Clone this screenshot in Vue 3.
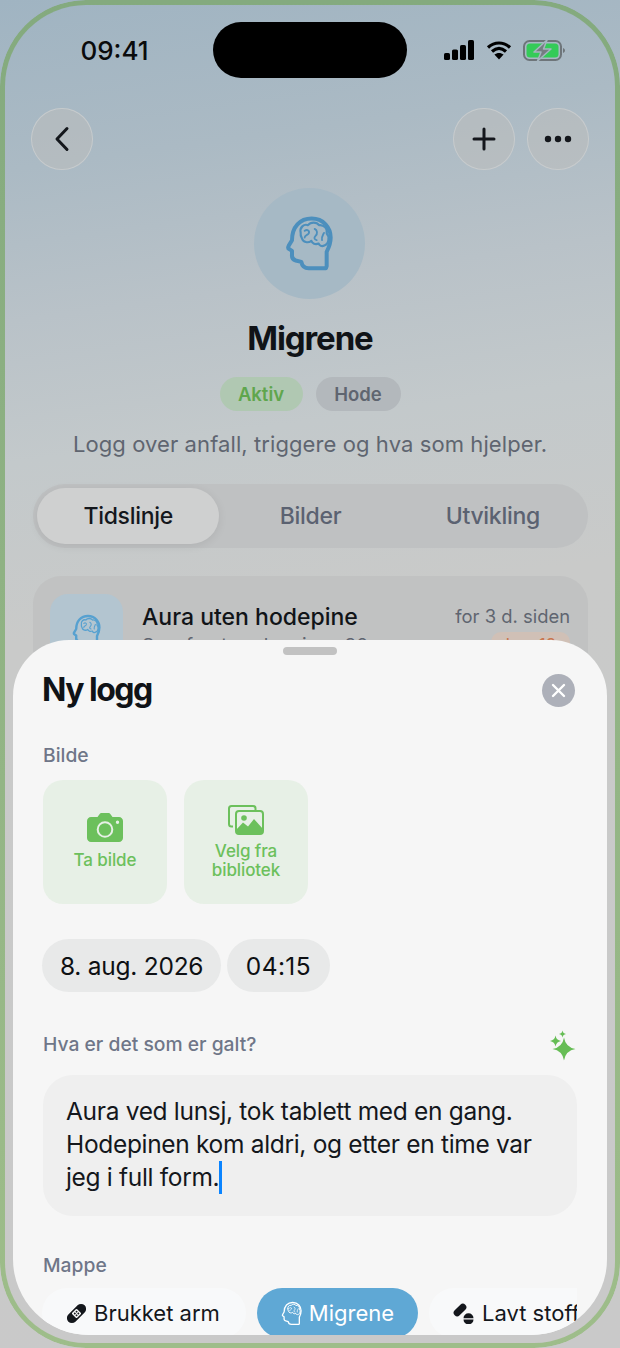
<script setup>
const star = (c, d, r) => {
  const k = r * 0.14
  return `M${c} ${d - r}Q${c + k} ${d - k} ${c + r} ${d}Q${c + k} ${d + k} ${c} ${d + r}Q${c - k} ${d + k} ${c - r} ${d}Q${c - k} ${d - k} ${c} ${d - r}Z`
}
const sparkle = [star(14, 19, 11.5), star(5.5, 11, 5.5), star(12.5, 4, 3.5)].join('')
</script>

<template>
  <div class="phone">
    <svg class="defs" width="0" height="0" aria-hidden="true">
      <symbol id="brain" viewBox="255 105 150 170">
        <path d="M378 264H326C313 264 306 256 304 245L287 241C278 239 275 231 276 222V212L268 207C264 205 264 201 266 197L276 180C276 140 300 115 335 115C370 115 392 142 392 172C392 192 385 205 380 215V258Z" />
        <path class="inner" d="M302 158C298 142 312 130 324 135C332 125 350 125 357 135C372 133 384 146 380 160C390 170 386 192 373 196C365 200 358 196 356 190C346 194 336 190 334 182C324 190 309 186 306 175C303 170 301 164 302 158Z" />
        <path class="inner detail" d="M314 152C322 146 330 152 326 160C322 166 314 164 314 172M344 146C352 150 354 160 346 168C342 172 342 178 350 180M372 158C368 166 364 170 366 180" />
      </symbol>
    </svg>

    <header class="status">
      <span class="time">09:41</span>
      <div class="island"></div>
      <div class="status-icons">
        <svg width="31" height="20" viewBox="0 0 31 20">
          <rect x="0" y="13" width="6" height="7" rx="1.6" /><rect x="8" y="9.5" width="6" height="10.5" rx="1.6" />
          <rect x="16" y="5" width="6" height="15" rx="1.6" /><rect x="24" y="0" width="6" height="20" rx="1.6" />
        </svg>
        <svg width="26" height="20" viewBox="0 0 26 20">
          <path d="M2 7.5C8.5 1.5 17.5 1.5 24 7.5M6 11.5C10.5 7.5 15.5 7.5 20 11.5" fill="none" stroke="#000" stroke-width="3.2" stroke-linecap="butt" />
          <path d="M8.4 14.6C11.2 12.3 14.8 12.3 17.6 14.6L13 19.6Z" />
        </svg>
        <svg class="batt" width="43" height="21" viewBox="0 0 43 21">
          <rect x="1" y="1" width="37" height="19" rx="5.5" fill="none" stroke="#6e757a" stroke-width="2" />
          <rect x="3.500" y="3.500" width="32" height="14" rx="3.500" fill="#34cb58" />
          <path d="M40 8v5c1.2-.4 2-1.4 2-2.5S41.200 8.400 40 8Z" fill="#6e757a" />
          <path d="M24 0L11 12H18L14.500 21L28 9H20.500Z" fill="#767d82" stroke="#a5b5bf" stroke-width="1.500" stroke-linejoin="round" />
        </svg>
      </div>
    </header>

    <nav class="nav">
      <button class="round">
        <svg width="16" height="26" viewBox="0 0 16 26"><path d="M13 2.500L3 13L13 23.500" /></svg>
      </button>
      <span class="nav-gap"></span>
      <button class="round">
        <svg width="26" height="26" viewBox="0 0 26 26"><path d="M13 3V23M3 13H23" /></svg>
      </button>
      <button class="round">
        <svg class="dots" width="28" height="8" viewBox="0 0 28 8"><circle cx="4" cy="4" r="3.200" /><circle cx="14" cy="4" r="3.200" /><circle cx="24" cy="4" r="3.200" /></svg>
      </button>
    </nav>

    <section class="hero">
      <div class="hero-icon">
        <svg class="brain brain-lg" width="50" height="57"><use href="#brain" /></svg>
      </div>
      <h1>Migrene</h1>
      <div class="chips">
        <span class="chip chip-green">Aktiv</span>
        <span class="chip chip-grey">Hode</span>
      </div>
      <p class="desc">Logg over anfall, triggere og hva som hjelper.</p>
    </section>

    <div class="tabs">
      <span class="tab tab-on">Tidslinje</span>
      <span class="tab">Bilder</span>
      <span class="tab">Utvikling</span>
    </div>

    <article class="card">
      <div class="card-tile">
        <svg class="brain brain-md" width="30" height="46"><use href="#brain" /></svg>
      </div>
      <div class="card-body">
        <div class="card-title">Aura uten hodepine</div>
        <div class="card-sub">Synsforstyrrelser i ca. 30</div>
      </div>
      <div class="card-side">
        <div class="card-when">for 3 d. siden</div>
        <div class="card-badge">Lav 12</div>
      </div>
    </article>

    <section class="sheet">
      <div class="handle"></div>
      <div class="sheet-head">
        <h2>Ny logg</h2>
        <button class="close">
          <svg width="15" height="15" viewBox="0 0 15 15"><path d="M2 2L13 13M13 2L2 13" /></svg>
        </button>
      </div>

      <div class="label label-first">Bilde</div>
      <div class="tiles">
        <div class="tile tile-cam">
          <svg width="36" height="29" viewBox="0 0 36 29">
            <path fill-rule="evenodd" d="M4 4H10.500L12.500 1.200C13 .5 13.800 0 14.800 0H21.200C22.200 0 23 .5 23.500 1.200L25.500 4H32C34.200 4 36 5.800 36 8V25C36 27.200 34.200 29 32 29H4C1.800 29 0 27.200 0 25V8C0 5.800 1.800 4 4 4ZM18 8.200A8.300 8.300 0 1 0 18 24.800A8.300 8.300 0 1 0 18 8.200ZM18 10.200A6.300 6.300 0 1 1 18 22.800A6.300 6.300 0 1 1 18 10.200ZM30.500 7.500A1.700 1.700 0 1 0 30.500 10.900A1.700 1.700 0 1 0 30.500 7.500Z" />
          </svg>
          <span>Ta bilde</span>
        </div>
        <div class="tile">
          <svg width="36" height="30" viewBox="0 0 36 30">
            <path d="M5 21.500H3.500C2 21.500 1 20.500 1 19V3.500C1 2 2 1 3.500 1H25C26.500 1 27.500 2 27.500 3.500V5" fill="none" stroke="#6cc05c" stroke-width="2" />
            <rect x="8" y="6" width="27" height="23" rx="3" fill="none" stroke="#6cc05c" stroke-width="2" />
            <path d="M8 25L15 17.500L20 21.500L26 14L35 24V26C35 27.700 33.700 29 32 29H11C9.300 29 8 27.700 8 26Z" />
            <circle cx="16" cy="13" r="2.800" />
          </svg>
          <span>Velg fra<br />bibliotek</span>
        </div>
      </div>

      <div class="dates">
        <span class="date">8. aug. 2026</span>
        <span class="date date-time">04:15</span>
      </div>

      <div class="label-row">
        <span class="label">Hva er det som er galt?</span>
        <svg class="sparkle" width="27" height="31" viewBox="0 0 27 31"><path :d="sparkle" /></svg>
      </div>

      <div class="field">
        Aura ved lunsj, tok tablett med en gang.<br />
        Hodepinen kom aldri, og etter en time var<br />
        jeg i full form.<span class="caret"></span>
      </div>

      <div class="label label-folder">Mappe</div>
      <div class="pills">
        <span class="pill pill-arm">
          <svg width="21" height="21" viewBox="0 0 21 21">
            <g transform="rotate(-45 10.500 10.500)">
              <rect x="-1" y="5.500" width="23" height="10" rx="5" />
              <rect x="7" y="7" width="7" height="7" rx="1" fill="#f8f9fa" />
              <rect x="8.500" y="8.500" width="1.600" height="1.600" /><rect x="11" y="8.500" width="1.600" height="1.600" />
              <rect x="8.500" y="11" width="1.600" height="1.600" /><rect x="11" y="11" width="1.600" height="1.600" />
            </g>
          </svg>
          Brukket arm
        </span>
        <span class="pill pill-on">
          <svg class="brain brain-sm" width="22" height="25"><use href="#brain" /></svg>
          Migrene
        </span>
        <span class="pill">
          <svg width="21" height="21" viewBox="0 0 21 21">
            <g transform="rotate(-45 7 7)"><rect x="-.5" y="3.500" width="15" height="7" rx="3.500" /></g>
            <path d="M10.500 15.200A5 5 0 0 1 20.500 15.200ZM10.500 16.400A5 5 0 0 0 20.500 16.400Z" />
          </svg>
          Lavt stoff
        </span>
      </div>
    </section>

    <div class="frame"></div>
  </div>
</template>

<style scoped>
.phone {
  position: relative;
  width: 620px;
  height: 1348px;
  overflow: hidden;
  box-sizing: border-box;
  padding-top: 22px;
  font-family: Inter, "Liberation Sans", sans-serif;
  background: linear-gradient(172deg, #a0b4c2 0, #abbac4 170px, #b9c2c8 320px, #c3c9cb 460px, #c9cac9 640px, #c9c9c9 100%);
  color: #14171c;
}
.defs { position: absolute; }
.status {
  display: grid;
  grid-template-columns: 213px 194px 213px;
  height: 56px;
  align-items: center;
}
.time {
  justify-self: center;
  padding-left: 16px;
  font-size: 26px;
  font-weight: 500;
  color: #0a0b0c;
}
.island {
  height: 56px;
  border-radius: 28px;
  background: #000;
}
.status-icons {
  display: flex;
  justify-content: center;
  align-items: center;
  gap: 11px;
  padding-right: 17px;
}
.status-icons svg { fill: #000; }
.nav {
  display: flex;
  gap: 12px;
  margin-top: 30px;
  padding: 0 31px;
}
.nav-gap { flex: 1; }
.round {
  display: flex;
  align-items: center;
  justify-content: center;
  box-sizing: border-box;
  width: 62px;
  height: 62px;
  padding: 0;
  border: 1.5px solid rgba(205, 208, 210, 0.75);
  border-radius: 50%;
  background: rgba(190, 190, 188, 0.5);
}
.round svg { fill: none; stroke: #14171c; stroke-width: 3; stroke-linecap: round; stroke-linejoin: round; }
.round .dots { fill: #14171c; stroke: none; }
.hero {
  display: flex;
  flex-direction: column;
  align-items: center;
  margin-top: 18px;
}
.hero-icon {
  display: flex;
  align-items: center;
  justify-content: center;
  width: 111px;
  height: 111px;
  margin-left: -1px;
  border-radius: 50%;
  background: #a6b9c5;
}
.brain { fill: none; stroke: #4c8fbd; stroke-linejoin: round; stroke-linecap: round; }
.brain-lg { stroke-width: 12; }
.brain-md { stroke-width: 12; stroke: #57a1d0; }
.brain-sm { stroke-width: 9; stroke: #fff; }
.inner { stroke-width: 6.500; }
.detail { stroke-width: 5.500; }
h1 {
  margin: 19px 0 0;
  font-size: 33px;
  line-height: 40px;
  font-weight: 700;
  letter-spacing: -1.1px;
  color: #101317;
}
.chips {
  display: flex;
  gap: 13px;
  margin-top: 19px;
}
.chip {
  display: flex;
  align-items: center;
  justify-content: center;
  height: 34px;
  border-radius: 17px;
  font-size: 18.500px;
  font-weight: 600;
}
.chip-green { width: 83px; background: #b0c8b2; color: #5fa64d; }
.chip-grey { width: 85px; background: #b3b8bc; color: #5f6570; }
.desc {
  margin: 18px 0 0;
  font-size: 22px;
  line-height: 30px;
  letter-spacing: 0.09px;
  color: #5f6570;
}
.tabs {
  display: grid;
  grid-template-columns: repeat(3, 1fr);
  box-sizing: border-box;
  height: 64px;
  margin: 25px 32px 0 33px;
  padding: 4px;
  border-radius: 32px;
  background: #bfc1c2;
}
.tab {
  display: flex;
  align-items: center;
  justify-content: center;
  border-radius: 28px;
  font-size: 23px;
  font-weight: 500;
  letter-spacing: -0.3px;
  color: #5b6271;
}
.tab-on {
  background: #cfd0d0;
  color: #14171c;
  box-shadow: 0 2px 10px rgba(0, 0, 0, 0.08);
}
.card {
  display: flex;
  gap: 19px;
  height: 160px;
  box-sizing: border-box;
  margin: 28px 32px 0 33px;
  padding: 18px 18px 0 17px;
  border-radius: 28px;
  background: #c1c2c2;
}
.card-tile {
  display: flex;
  align-items: center;
  justify-content: center;
  width: 73px;
  height: 73px;
  flex-shrink: 0;
  border-radius: 18px;
  background: #b3c5d0;
}
.card-body { flex: 1; }
.card-title {
  margin-top: 9px;
  font-size: 23px;
  line-height: 28px;
  font-weight: 500;
  white-space: nowrap;
  color: #111418;
}
.card-sub {
  margin-top: 3px;
  font-size: 19px;
  line-height: 24px;
  color: #5f6570;
  white-space: nowrap;
}
.card-side {
  display: flex;
  flex-direction: column;
  align-items: flex-end;
}
.card-when {
  margin-top: 10px;
  font-size: 18.400px;
  line-height: 24px;
  color: #5f6570;
}
.card-badge {
  margin-top: 4px;
  padding: 2px 14px;
  border-radius: 10px;
  background: #d0c0b6;
  color: #c9764f;
  font-size: 17px;
  line-height: 22px;
}
.sheet {
  position: absolute;
  left: 13px;
  right: 13px;
  top: 640px;
  bottom: 13px;
  overflow: hidden;
  box-sizing: border-box;
  padding: 0 30px;
  border-radius: 56px 56px 76px 76px;
  background: #f6f6f6;
}
.handle {
  width: 54px;
  height: 8px;
  margin: 7px auto 0;
  border-radius: 4px;
  background: #c2c2c2;
}
.sheet-head {
  display: flex;
  align-items: center;
  justify-content: space-between;
  height: 40px;
  margin-top: 15px;
}
h2 {
  margin: 0 0 0 -1px;
  font-size: 32px;
  line-height: 40px;
  font-weight: 700;
  letter-spacing: -1.500px;
  color: #101317;
}
.close {
  display: flex;
  align-items: center;
  justify-content: center;
  width: 33px;
  height: 33px;
  padding: 0;
  margin-right: 2px;
  border: 0;
  border-radius: 50%;
  background: #adb0b9;
}
.close svg { fill: none; stroke: #fff; stroke-width: 2.400; stroke-linecap: round; }
.label {
  font-size: 19.300px;
  line-height: 24px;
  font-weight: 500;
  color: #6f7688;
}
.label-first { margin-top: 33px; }
.tiles {
  display: flex;
  gap: 17px;
  margin-top: 13px;
}
.tile {
  display: flex;
  flex-direction: column;
  align-items: center;
  justify-content: center;
  gap: 7px;
  width: 124px;
  height: 124px;
  box-sizing: border-box;
  border-radius: 20px;
  background: #e7f0e6;
  color: #6cc05c;
  font-size: 17px;
  font-weight: 500;
  line-height: 19px;
  letter-spacing: -0.1px;
  text-align: center;
}
.tile svg { fill: #6cc05c; }
.tile-cam {
  gap: 9px;
  padding-bottom: 2px;
}
.dates {
  display: flex;
  gap: 6px;
  margin: 35px 0 0 -1px;
}
.date {
  display: flex;
  align-items: center;
  height: 53px;
  padding: 0 18px;
  border-radius: 27px;
  background: #e8e9e9;
  font-size: 24.500px;
  letter-spacing: -0.25px;
  color: #0e1013;
}
.date-time {
  padding: 0 18.500px;
  letter-spacing: 0.4px;
}
.label-row {
  display: flex;
  align-items: center;
  justify-content: space-between;
  height: 24px;
  margin-top: 40px;
}
.sparkle {
  fill: #66bd55;
  margin: -6px 0 -8px;
}
.field {
  box-sizing: border-box;
  height: 141px;
  margin-top: 19px;
  padding: 20px 23px 0;
  border-radius: 30px;
  background: #efefef;
  font-size: 24.500px;
  line-height: 33px;
  letter-spacing: -0.32px;
  white-space: nowrap;
  color: #14171c;
}
.caret {
  display: inline-block;
  width: 3px;
  height: 33px;
  margin-left: 0;
  vertical-align: -8px;
  background: #0a84ff;
}
.label-folder { margin-top: 37px; }
.pills {
  display: flex;
  gap: 11px;
  margin: 11px 0 0 -1px;
  overflow: hidden;
}
.pill {
  display: flex;
  align-items: center;
  flex-shrink: 0;
  gap: 8px;
  height: 50px;
  padding: 0 24px;
  border-radius: 25px;
  background: #f8f9fa;
  font-size: 22px;
  font-weight: 400;
  color: #14171c;
  white-space: nowrap;
}
.pill svg { fill: #14171c; }
.pill .brain { fill: none; }
.pill-arm { gap: 7px; padding-right: 26px; }
.pill-on { gap: 6px; background: #5fa8d5; color: #fff; }
.frame {
  position: absolute;
  inset: 0;
  box-sizing: border-box;
  padding: 5px;
  border-radius: 86px;
  background: linear-gradient(#84aa7e, #9ebd8a);
  -webkit-mask: linear-gradient(#000 0 0) content-box, linear-gradient(#000 0 0);
  mask: linear-gradient(#000 0 0) content-box exclude, linear-gradient(#000 0 0);
  -webkit-mask-composite: xor;
  pointer-events: none;
}
</style>
